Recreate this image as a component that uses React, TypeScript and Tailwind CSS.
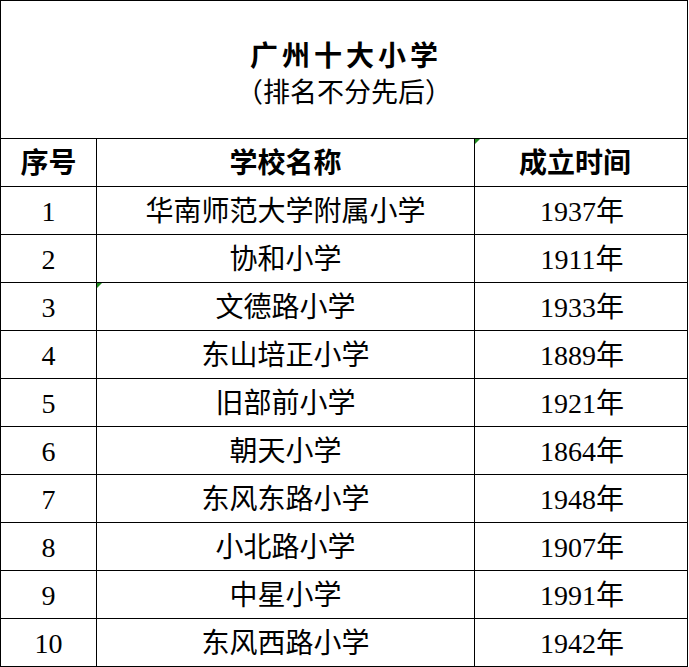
const rows = [
  { no: "1", name: "华南师范大学附属小学", year: "1937" },
  { no: "2", name: "协和小学", year: "1911" },
  { no: "3", name: "文德路小学", year: "1933" },
  { no: "4", name: "东山培正小学", year: "1889" },
  { no: "5", name: "旧部前小学", year: "1921" },
  { no: "6", name: "朝天小学", year: "1864" },
  { no: "7", name: "东风东路小学", year: "1948" },
  { no: "8", name: "小北路小学", year: "1907" },
  { no: "9", name: "中星小学", year: "1991" },
  { no: "10", name: "东风西路小学", year: "1942" },
];

// little green marker Excel draws in a cell's top-left corner
const Marker = () => (
  <span className="absolute left-0 top-0 w-0 h-0 border-t-[5px] border-t-[#1f8a1f] border-r-[5px] border-r-transparent" />
);

const App = () => {
  return (
    <div className="bg-white w-[689px] h-[667px] font-['Liberation_Serif','Noto_Sans_CJK_SC',serif] text-black">
      <div className="w-[688px] border border-black">
        {/* Title block */}
        <div className="h-[137px] flex flex-col items-center pt-[38px]">
          <div className="text-[28px] leading-[36px] font-bold tracking-[4px] pl-[4px]">广州十大小学</div>
          <div className="text-[27px] leading-[36px]">（排名不分先后）</div>
        </div>

        {/* Column headers */}
        <div className="grid grid-cols-[95px_378px_1fr] border-t border-black h-[48px] text-[28px] font-bold">
          <div className="flex items-center justify-center pt-[3px]">序号</div>
          <div className="flex items-center justify-center border-l border-black pt-[3px]">学校名称</div>
          <div className="relative flex items-center justify-center border-l border-black pt-[3px] pr-[12px]">
            <Marker />
            成立时间
          </div>
        </div>

        {rows.map((r) => (
          <div
            key={r.no}
            className="grid grid-cols-[95px_378px_1fr] border-t border-black h-[48px] text-[28px]"
          >
            <div className="flex items-center justify-center pt-[3px]">{r.no}</div>
            <div className="relative flex items-center justify-center border-l border-black pt-[3px]">
              {r.no === "3" && <Marker />}
              {r.name}
            </div>
            <div className="flex items-center justify-center border-l border-black pt-[3px] pl-[2px]">
              {r.year}年
            </div>
          </div>
        ))}
      </div>
    </div>
  );
};

export default App;
